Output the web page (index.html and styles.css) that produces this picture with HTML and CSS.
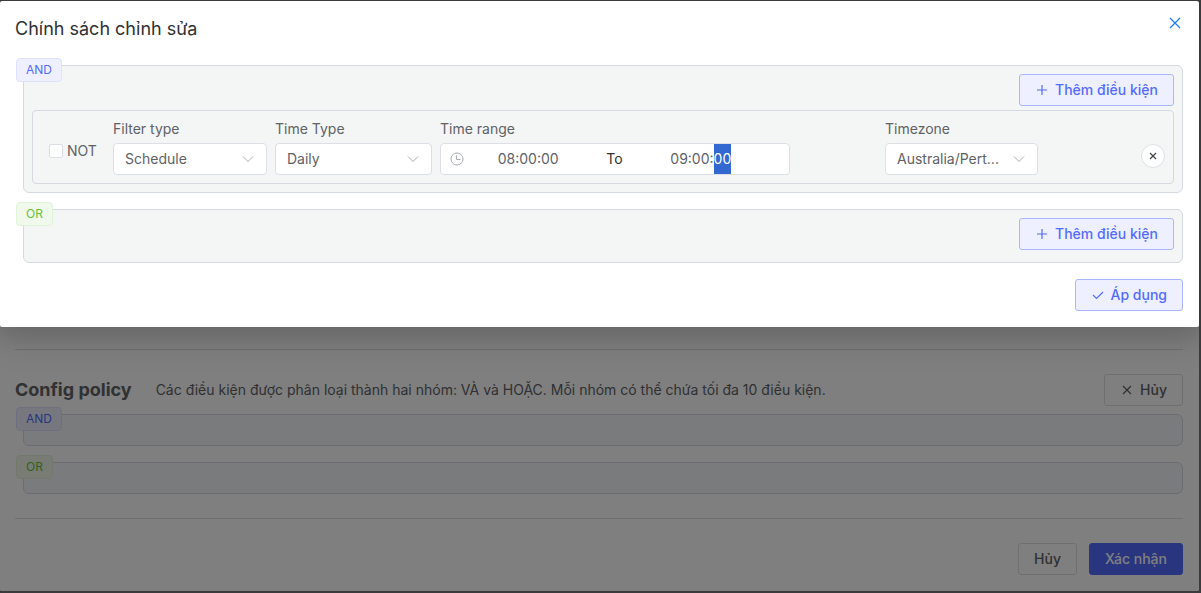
FILE: index.html
```html
<!DOCTYPE html>
<html lang="vi">
<head>
<meta charset="utf-8">
<title>Config policy</title>
<link rel="stylesheet" href="styles.css">
</head>
<body>
<div class="window">
  <main class="page">
    <section class="policy">
      <header class="policy-head">
        <h2 class="policy-title">Config policy</h2>
        <p class="policy-note">Các điều kiện được phân loại thành hai nhóm: VÀ và HOẶC. Mỗi nhóm có thể chứa tối đa 10 điều kiện.</p>
        <button class="btn" type="button"><svg class="icon" viewBox="0 0 14 14"><path d="M3 3l8 8M11 3l-8 8"/></svg>Hủy</button>
      </header>
      <div class="groups">
        <div class="group group-empty"><span class="tag tag-and">AND</span></div>
        <div class="group group-empty"><span class="tag tag-or">OR</span></div>
      </div>
    </section>
    <footer class="page-foot">
      <button class="btn" type="button">Hủy</button>
      <button class="btn btn-solid" type="button">Xác nhận</button>
    </footer>
  </main>
  <div class="overlay">
    <div class="dialog" role="dialog" aria-labelledby="dialog-title">
      <header class="dialog-head">
        <h1 class="dialog-title" id="dialog-title">Chính sách chỉnh sửa</h1>
        <button class="close" type="button" aria-label="Close"><svg class="icon-close" viewBox="0 0 16 16"><path d="M3 3l10 10M13 3L3 13"/></svg></button>
      </header>
      <div class="groups">
        <div class="group group-edit">
          <span class="tag tag-and">AND</span>
          <button class="btn btn-plain" type="button"><svg class="icon icon-plus" viewBox="0 0 14 14"><path d="M7 2v10M2 7h10"/></svg>Thêm điều kiện</button>
          <div class="condition">
            <label class="check"><input class="check-box" type="checkbox">NOT</label>
            <div class="field">
              <label class="field-label" for="filter-type">Filter type</label>
              <div class="select-wrap">
                <select class="select" id="filter-type"><option>Schedule</option></select>
                <svg class="chevron" viewBox="0 0 14 14"><path d="M2 4.5l5 5 5-5"/></svg>
              </div>
            </div>
            <div class="field">
              <label class="field-label" for="time-type">Time Type</label>
              <div class="select-wrap">
                <select class="select" id="time-type"><option>Daily</option></select>
                <svg class="chevron" viewBox="0 0 14 14"><path d="M2 4.5l5 5 5-5"/></svg>
              </div>
            </div>
            <div class="field">
              <label class="field-label" for="time-start">Time range</label>
              <div class="range">
                <svg class="clock" viewBox="0 0 14 14"><circle cx="7" cy="7" r="6"/><path d="M6.5 3.5v4h4"/></svg>
                <input class="time" id="time-start" type="text" value="08:00:00">
                <span class="range-to">To</span>
                <input class="time" id="time-end" type="text" value="09:00:00" aria-label="End time">
              </div>
            </div>
            <div class="field">
              <label class="field-label" for="timezone">Timezone</label>
              <div class="select-wrap">
                <select class="select" id="timezone"><option>Australia/Pert...</option></select>
                <svg class="chevron" viewBox="0 0 14 14"><path d="M2 4.5l5 5 5-5"/></svg>
              </div>
            </div>
            <button class="remove" type="button" aria-label="Remove"><svg class="icon-remove" viewBox="0 0 12 12"><path d="M3 3l6 6M9 3L3 9"/></svg></button>
          </div>
        </div>
        <div class="group group-edit">
          <span class="tag tag-or">OR</span>
          <button class="btn btn-plain" type="button"><svg class="icon icon-plus" viewBox="0 0 14 14"><path d="M7 2v10M2 7h10"/></svg>Thêm điều kiện</button>
        </div>
      </div>
      <footer class="dialog-foot">
        <button class="btn btn-plain" type="button"><svg class="icon" viewBox="0 0 14 14"><path d="M2 7l3.5 3.5L12 4"/></svg>Áp dụng</button>
      </footer>
    </div>
  </div>
</div>
<script src="script.js"></script>
</body>
</html>
```
FILE: styles.css
```css
* { box-sizing: border-box; }

body {
  margin: 0;
  padding: 1px 2px 2px 0;
  background: #3b3b3d;
  color: #606266;
  font: 14px/20px Inter, "Noto Sans", sans-serif;
}

h1, h2, p { margin: 0; }
button, input, select { font: inherit; color: inherit; }
svg { fill: none; stroke: currentColor; flex: none; }

.window {
  position: relative;
  min-height: calc(100vh - 3px);
  display: flex;
  flex-direction: column;
  justify-content: flex-end;
  background: #fff;
  border-radius: 2px;
  overflow: hidden;
}

.page { padding: 0 16px 16px 15px; }

.policy {
  padding: 24px 0;
  border-top: 1px solid #dcdfe6;
  border-bottom: 1px solid #dcdfe6;
}

.policy-head {
  display: flex;
  align-items: center;
  gap: 24px;
  margin-bottom: 8px;
}

.policy-title {
  color: #606266;
  font-size: 18px;
  line-height: 24px;
  font-weight: 700;
}

.policy-note { flex: 1; }

.page-foot {
  display: flex;
  justify-content: flex-end;
  gap: 12px;
  padding-top: 24px;
}

.btn {
  display: inline-flex;
  align-items: center;
  justify-content: center;
  gap: 6px;
  height: 32px;
  padding: 0 15px;
  border: 1px solid #dcdfe6;
  border-radius: 3px;
  background: transparent;
  font-weight: 500;
  white-space: nowrap;
}

.btn-solid { border-color: #536bff; background: #536bff; color: #fff; }
.btn-plain { border-color: #a9b5ff; background: #eef0ff; color: #536bff; }

.icon { width: 14px; height: 14px; stroke-width: 1.2; }

.groups {
  display: flex;
  flex-direction: column;
  gap: 16px;
  padding-left: 8px;
}

.group {
  position: relative;
  border: 1px solid #d5d9e0;
  border-radius: 6px;
}

.group-empty { height: 32px; background: #f5f7fa; }

.group-edit {
  display: flex;
  flex-direction: column;
  align-items: flex-end;
  padding: 8px;
  background: #f4f6f5;
}

.group-edit > .btn { margin-bottom: 4px; }

.tag {
  position: absolute;
  top: -8px;
  left: -8px;
  height: 24px;
  padding: 0 9px;
  border: 1px solid;
  border-radius: 4px;
  font-size: 12px;
  line-height: 22px;
}

.tag-and { border-color: #dde1ff; background: #eef0ff; color: #536bff; }
.tag-or { border-color: #e1f3d8; background: #f0f9eb; color: #67c23a; }

.overlay {
  position: absolute;
  inset: 0;
  background: rgba(0, 0, 0, 0.5);
}

.dialog {
  padding: 14px 16px 16px 15px;
  border-radius: 2px;
  background: #fff;
  box-shadow: 0 12px 32px 4px rgba(0, 0, 0, 0.12), 0 8px 20px rgba(0, 0, 0, 0.08);
}

.dialog-head {
  display: flex;
  justify-content: space-between;
  align-items: flex-start;
  padding-bottom: 22px;
}

.dialog-title {
  color: #303133;
  font-size: 18px;
  line-height: 28px;
  font-weight: 400;
}

.close {
  display: flex;
  padding: 0;
  border: 0;
  background: none;
  color: #1a80f0;
}

.icon-close { width: 16px; height: 16px; stroke-width: 1.3; }

.condition {
  align-self: stretch;
  display: grid;
  grid-template-columns: 56px minmax(0, 154fr) minmax(0, 157fr) minmax(0, 437fr) minmax(0, 153fr) minmax(0, 119fr);
  gap: 8px;
  align-items: center;
  padding: 8px 8px 8px 16px;
  border: 1px solid #d5d9e0;
  border-radius: 4px;
}

.check {
  display: flex;
  align-items: center;
  gap: 4px;
  padding-top: 8px;
}

.check-box {
  appearance: none;
  width: 14px;
  height: 14px;
  margin: 0;
  border: 1px solid #dcdfe6;
  border-radius: 2px;
  background: #fff;
}

.field {
  display: flex;
  flex-direction: column;
  gap: 4px;
}

.select-wrap { display: grid; align-items: center; }

.select {
  grid-area: 1 / 1;
  appearance: none;
  width: 100%;
  height: 32px;
  padding: 0 32px 0 11px;
  border: 1px solid #dcdfe6;
  border-radius: 4px;
  background: #fff;
}

.chevron {
  grid-area: 1 / 1;
  justify-self: end;
  width: 14px;
  height: 14px;
  margin-right: 12px;
  color: #a8abb2;
  pointer-events: none;
}

.range {
  display: flex;
  align-items: center;
  width: 100%;
  max-width: 350px;
  height: 32px;
  padding: 0 24px 0 9px;
  border: 1px solid #dcdfe6;
  border-radius: 4px;
  background: #fff;
}

.clock { width: 14px; height: 14px; color: #a8abb2; }

.time {
  flex: 128 1 0;
  min-width: 0;
  height: 30px;
  padding: 0;
  border: 0;
  outline: 0;
  background: none;
  line-height: 30px;
  text-align: center;
  caret-color: transparent;
}

.time::selection { background: rgba(51, 103, 209, 0.996); color: #fff; }

.range-to {
  flex: 44 1 0;
  color: #303133;
  text-align: center;
}

.remove {
  justify-self: end;
  display: flex;
  align-items: center;
  justify-content: center;
  width: 24px;
  height: 24px;
  margin-top: 18px;
  padding: 0;
  border: 1px solid #dcdfe6;
  border-radius: 50%;
  background: #fff;
  color: #404245;
}

.icon-remove { width: 12px; height: 12px; stroke-width: 1.2; }

.dialog-foot {
  display: flex;
  justify-content: flex-end;
  padding-top: 16px;
}
```
FILE: script.js
```js
// Start editing at the seconds of the end time.
const endTime = document.getElementById("time-end");
endTime.focus();
endTime.setSelectionRange(6, 8);
```
